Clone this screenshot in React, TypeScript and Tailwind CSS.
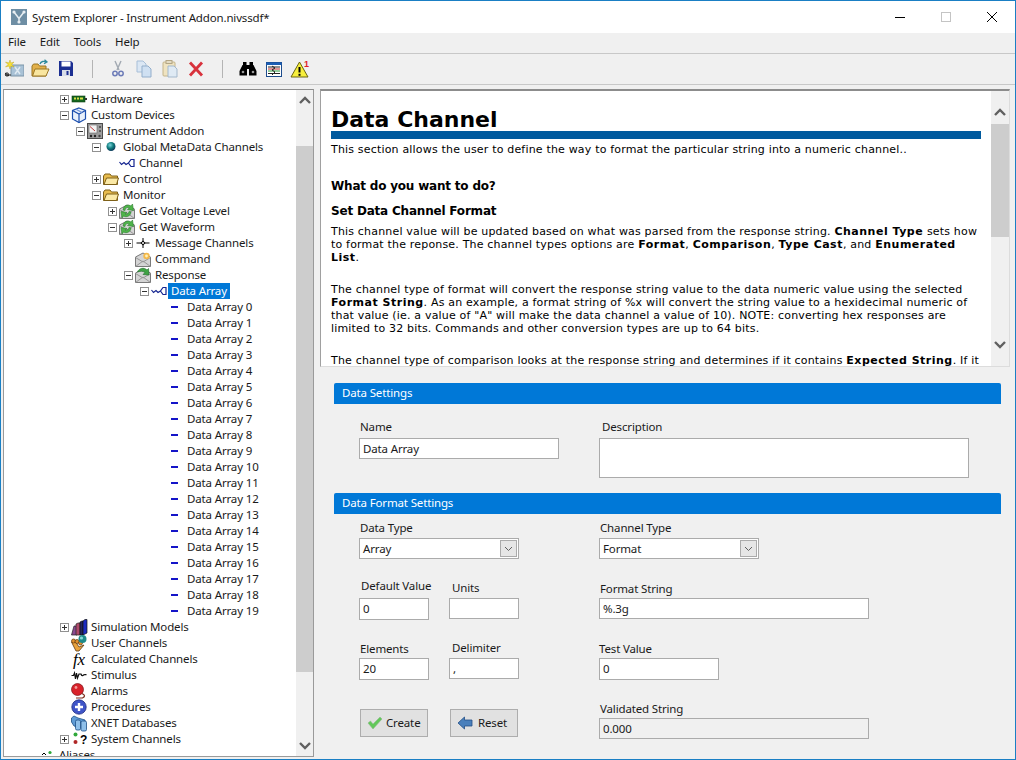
import type { ReactNode } from 'react';

type IconName =
  | 'hardware' | 'cube' | 'instrument' | 'globe' | 'channel' | 'folder' | 'message' | 'crosshair'
  | 'command' | 'response' | 'dash' | 'books' | 'users' | 'fx' | 'stimulus' | 'bell' | 'procedure'
  | 'xnet' | 'system' | 'alias';

type TreeRow = { label: string; level: number; exp?: 'plus' | 'minus'; icon: IconName; selected?: boolean };

const arrayRows: TreeRow[] = Array.from({ length: 20 }, (_, i) => ({
  label: `Data Array ${i}`,
  level: 6,
  icon: 'dash' as IconName,
}));

const rows: TreeRow[] = [
  { label: 'Hardware', level: 0, exp: 'plus', icon: 'hardware' },
  { label: 'Custom Devices', level: 0, exp: 'minus', icon: 'cube' },
  { label: 'Instrument Addon', level: 1, exp: 'minus', icon: 'instrument' },
  { label: 'Global MetaData Channels', level: 2, exp: 'minus', icon: 'globe' },
  { label: 'Channel', level: 3, icon: 'channel' },
  { label: 'Control', level: 2, exp: 'plus', icon: 'folder' },
  { label: 'Monitor', level: 2, exp: 'minus', icon: 'folder' },
  { label: 'Get Voltage Level', level: 3, exp: 'plus', icon: 'message' },
  { label: 'Get Waveform', level: 3, exp: 'minus', icon: 'message' },
  { label: 'Message Channels', level: 4, exp: 'plus', icon: 'crosshair' },
  { label: 'Command', level: 4, icon: 'command' },
  { label: 'Response', level: 4, exp: 'minus', icon: 'response' },
  { label: 'Data Array', level: 5, exp: 'minus', icon: 'channel', selected: true },
  ...arrayRows,
  { label: 'Simulation Models', level: 0, exp: 'plus', icon: 'books' },
  { label: 'User Channels', level: 0, icon: 'users' },
  { label: 'Calculated Channels', level: 0, icon: 'fx' },
  { label: 'Stimulus', level: 0, icon: 'stimulus' },
  { label: 'Alarms', level: 0, icon: 'bell' },
  { label: 'Procedures', level: 0, icon: 'procedure' },
  { label: 'XNET Databases', level: 0, icon: 'xnet' },
  { label: 'System Channels', level: 0, exp: 'plus', icon: 'system' },
  { label: 'Aliases', level: -2, icon: 'alias' },
];

function Envelope() {
  return (
    <>
      <path d="M0.5 6 L8 2 L15.5 6 V15.5 H0.5 Z" fill="#d4d4d4" stroke="#7a7a7a" />
      <path d="M0.5 15.5 L8 10 L15.5 15.5 M0.5 6.5 L8 11 L15.5 6.5" fill="none" stroke="#969696" />
    </>
  );
}

function TreeIcon({ name }: { name: IconName }) {
  let body: ReactNode = null;
  switch (name) {
    case 'hardware':
      body = (
        <>
          <rect x="1" y="5" width="13" height="6" fill="#14661f" stroke="#0d3f14" strokeWidth="0.6" />
          <rect x="3" y="6.5" width="2" height="2" fill="#d8e04a" />
          <rect x="6" y="6.5" width="2" height="2" fill="#d8e04a" />
          <rect x="9" y="6.5" width="3" height="2" fill="#d8e04a" />
          <path d="M14 7 H16 V9 H14" fill="#333" />
        </>
      );
      break;
    case 'cube':
      body = (
        <g fill="none" stroke="#1c4fae" strokeWidth="1.2">
          <path d="M8 1 L14.5 3.5 V12 L8 15.5 L1.5 12 V3.5 Z" fill="#e8f0fb" />
          <path d="M1.5 3.5 L8 7 L14.5 3.5 M8 7 V15.5" />
          <path d="M5 2.3 L11 5.5" stroke="#6f93d6" />
        </g>
      );
      break;
    case 'instrument':
      body = (
        <>
          <rect x="0.5" y="0.5" width="15" height="15" fill="#9c9c9c" stroke="#4c4c4c" />
          <rect x="2" y="2" width="8" height="8" fill="#f2f2f2" stroke="#666" strokeWidth="0.6" />
          <path d="M3 3.5 L8 8" stroke="#c23a3a" />
          <circle cx="13" cy="4" r="1" fill="#444" />
          <circle cx="13" cy="8" r="1" fill="#444" />
          <circle cx="4" cy="13" r="1.2" fill="#222" />
          <circle cx="8" cy="13" r="1.2" fill="#222" />
          <circle cx="12.5" cy="13" r="1.2" fill="#444" />
        </>
      );
      break;
    case 'globe':
      body = (
        <>
          <defs>
            <radialGradient id="globeFill" cx="0.4" cy="0.35" r="0.7">
              <stop offset="0" stopColor="#7fd4e0" />
              <stop offset="0.5" stopColor="#11807f" />
              <stop offset="1" stopColor="#0b2f55" />
            </radialGradient>
          </defs>
          <circle cx="8" cy="7.5" r="4.5" fill="url(#globeFill)" />
        </>
      );
      break;
    case 'channel':
      body = (
        <g fill="none" stroke="#14248f" strokeWidth="1.2">
          <path d="M0.5 7 L2.5 9.5 L5 7.5 L7 9.5 L9.5 8" />
          <path d="M15 4.5 H12 L9.5 8 L12 11.5 H15 Z" />
        </g>
      );
      break;
    case 'folder':
      body = (
        <>
          <path d="M0.5 5 L2 3 H7 L8.5 5 H14.5 V13.5 H0.5 Z" fill="#e8bc4e" stroke="#7e6018" />
          <path d="M1 13.5 L3.5 7 H15.5 L13.5 13.5 Z" fill="#fbe9a6" stroke="#7e6018" />
        </>
      );
      break;
    case 'message':
      body = (
        <>
          <Envelope />
          <path d="M4 7 A5 5 0 0 1 12 3 L13.5 1 L14.5 7.5 L8.5 6.5 L10.5 4.8 A3 3 0 0 0 6 7.5 Z" fill="#4fb54a" stroke="#2a7d2e" strokeWidth="0.6" />
          <path d="M12 9 A5 5 0 0 1 4.5 13 L3 15 L2 8.5 L8 9.5 L6 11.2 A3 3 0 0 0 10 8.5 Z" fill="#4fb54a" stroke="#2a7d2e" strokeWidth="0.6" />
        </>
      );
      break;
    case 'crosshair':
      body = (
        <>
          <path d="M1.5 8 H14.5 M8 3 V13" stroke="#000" />
          <path d="M8 5.5 L10.5 8 L8 10.5 L5.5 8 Z" fill="#000" />
          <circle cx="8" cy="8" r="1" fill="#fff" />
        </>
      );
      break;
    case 'command':
      body = (
        <>
          <Envelope />
          <circle cx="11.5" cy="5" r="3.2" fill="#f4b84a" />
          <circle cx="11.5" cy="5" r="1.4" fill="#fff2b8" />
        </>
      );
      break;
    case 'response':
      body = (
        <>
          <Envelope />
          <path d="M2.5 5 C4 1 9 0 12 3 L13.5 1.5 L14 8 L8 7.5 L10 5.5 C8 4 5 4 2.5 5 Z" fill="#3fa344" stroke="#1e6b28" strokeWidth="0.6" />
        </>
      );
      break;
    case 'dash':
      body = <rect x="4" y="7" width="7" height="2" fill="#1414c8" />;
      break;
    case 'books':
      body = (
        <>
          <path d="M0.5 16 L3 7 H6 V16 Z" fill="#8a4a8f" stroke="#222" strokeWidth="0.7" />
          <path d="M5 16 V5 L7 4 H9 V16 Z" fill="#b04a6a" stroke="#222" strokeWidth="0.7" />
          <path d="M9 16 V3 L11 2 H12 V16 Z" fill="#25255c" stroke="#111" strokeWidth="0.7" />
          <path d="M12 16 V2 L14 0.5 H16 V14 Z" fill="#1c2bc0" stroke="#111" strokeWidth="0.7" />
        </>
      );
      break;
    case 'users':
      body = (
        <>
          <path d="M0.5 7 L5 16 L8 16 L13 10 L8 12 L4 6 Z" fill="#e9a23c" stroke="#5e3a10" strokeWidth="0.8" />
          <circle cx="2.5" cy="6" r="2" fill="#e2912c" stroke="#5e3a10" strokeWidth="0.7" />
          <circle cx="6" cy="6.5" r="2" fill="#e2912c" stroke="#5e3a10" strokeWidth="0.7" />
          <circle cx="9.5" cy="8" r="2" fill="#e2912c" stroke="#5e3a10" strokeWidth="0.7" />
          <circle cx="11.5" cy="4" r="4" fill="#1d8a8a" />
          <circle cx="10.5" cy="3" r="1.6" fill="#86d8d8" />
        </>
      );
      break;
    case 'fx':
      body = (
        <text x="2" y="14" fontFamily="'Liberation Serif', serif" fontStyle="italic" fontSize="17" fill="#000">
          fx
        </text>
      );
      break;
    case 'stimulus':
      body = (
        <path
          d="M0.5 8.5 H2.5 L3.5 6 L4.5 12 L5.5 6 L6.5 11 L8 7 H10 C10.5 9 12 9 12.5 8 C13.5 7 14.5 8 15.5 7.5"
          fill="none"
          stroke="#111"
          strokeWidth="1.2"
        />
      );
      break;
    case 'bell':
      body = (
        <>
          <circle cx="6.5" cy="6.5" r="6" fill="#d8222a" stroke="#7d1015" strokeWidth="0.7" />
          <circle cx="5" cy="4.5" r="1.4" fill="#f49a9a" />
          <path d="M11 10.5 C14 12 14.5 13.5 11.5 15 H5" fill="none" stroke="#7a2a1a" strokeWidth="1.2" />
        </>
      );
      break;
    case 'procedure':
      body = (
        <>
          <circle cx="8" cy="8" r="7.2" fill="#3f55c8" stroke="#1c2a80" strokeWidth="0.8" />
          <path d="M8 4 V12 M4 8 H12" stroke="#fff" strokeWidth="2.4" />
        </>
      );
      break;
    case 'xnet':
      body = (
        <g stroke="#1c4f86" strokeWidth="0.8">
          <path d="M0.5 3 L3 1 L7 3 L14 5 V8 L7 7 V12 L3 11 L0.5 7 Z" fill="#5f9cd6" />
          <rect x="4.5" y="5" width="5" height="10" rx="1.5" fill="#8fc0ea" />
          <rect x="10" y="6" width="5.5" height="10" rx="1.5" fill="#8fc0ea" />
        </g>
      );
      break;
    case 'system':
      body = (
        <>
          <circle cx="4.5" cy="3.5" r="2" fill="#2fa83a" />
          <circle cx="4.5" cy="11" r="2" fill="#b02626" />
          <text x="9" y="12.5" fontFamily="'Liberation Sans', sans-serif" fontWeight="700" fontSize="12" fill="#000">
            ?
          </text>
        </>
      );
      break;
    case 'alias':
      body = (
        <>
          <path d="M3 8 L5 6 L7 8" fill="none" stroke="#000" />
          <circle cx="11" cy="5.5" r="1.6" fill="#2fa83a" />
        </>
      );
      break;
  }
  return (
    <svg width="16" height="16" viewBox="0 0 16 16" className="shrink-0 overflow-visible">
      {body}
    </svg>
  );
}

function Expander({ kind }: { kind?: 'plus' | 'minus' }) {
  if (!kind) return <span className="w-[9px] h-[9px] shrink-0" />;
  return (
    <span className="relative w-[9px] h-[9px] shrink-0 border border-[#919191] bg-white flex items-center justify-center">
      <span className="absolute w-[5px] h-px bg-[#333]" />
      {kind === 'plus' && <span className="absolute w-px h-[5px] bg-[#333]" />}
    </span>
  );
}

function Row({ row }: { row: TreeRow }) {
  return (
    <div className="flex items-center h-4 whitespace-nowrap" style={{ paddingLeft: 56 + row.level * 16 }}>
      <Expander kind={row.exp} />
      <span className="w-[2px] shrink-0" />
      <TreeIcon name={row.icon} />
      <span className={`ml-px px-[3px] h-4 leading-4 ${row.selected ? 'bg-[#0078d7] text-white' : ''}`}>{row.label}</span>
    </div>
  );
}

function Chevron({ up }: { up?: boolean }) {
  return (
    <svg width="12" height="8" viewBox="0 0 12 8" className="block">
      <path d={up ? 'M1 7 L6 2 L11 7' : 'M1 1 L6 6 L11 1'} fill="none" stroke="#606060" strokeWidth="2.4" />
    </svg>
  );
}

function ToolIcon({ children }: { children: ReactNode }) {
  return (
    <div className="w-[26px] flex justify-center">
      <svg width="20" height="20" viewBox="0 0 20 20">
        {children}
      </svg>
    </div>
  );
}

function Sep() {
  return (
    <div className="w-[26px] flex justify-center">
      <div className="w-px h-[18px] bg-[#b4b4b4]" />
    </div>
  );
}

function Toolbar() {
  return (
    <div className="h-[32px] border-t border-b border-[#c8c8c8] flex items-center">
      <ToolIcon>
        <rect x="7" y="6" width="13" height="11" fill="#a9c2d6" stroke="#7c95a8" />
        <path d="M11 8 L16 15 M16 8 L11 15" stroke="#dfeaf2" strokeWidth="1.5" />
        <path d="M6 1 L6.8 4 L10 3 L7.8 5.5 L10 8 L6.8 7 L6 10 L5 7 L1.5 8 L4 5.5 L1.5 3 L5 4 Z" fill="#f6e23a" stroke="#b79a10" strokeWidth="0.4" />
        <path d="M1 16 H7 M1 14 L5 17" stroke="#222" fill="none" />
        <circle cx="3" cy="15.5" r="1.6" fill="none" stroke="#222" />
      </ToolIcon>
      <ToolIcon>
        <path d="M2 7 L3.5 5 H8 L9.5 7 H16 V17 H2 Z" fill="#e2b04a" stroke="#9a7624" />
        <path d="M2.5 17 L5 10 H19 L16 17 Z" fill="#f9e6a0" stroke="#9a7624" />
        <path d="M10 5 C11 2 14 2 16 3 M14.5 0.8 L17 3 L14 4.8" fill="none" stroke="#2e8a9c" strokeWidth="1.3" />
      </ToolIcon>
      <ToolIcon>
        <path d="M3 2 H15 L17 4 V17 H3 Z" fill="#1c2f92" />
        <rect x="5.5" y="2.5" width="9" height="5" fill="#fff" />
        <rect x="6" y="11" width="8" height="6" fill="#d8dde8" />
        <rect x="10.5" y="12" width="2" height="4" fill="#1c2f92" />
      </ToolIcon>
      <Sep />
      <ToolIcon>
        <path d="M7 2 L11 11 M13 2 L9 11" stroke="#a2a9b2" strokeWidth="1.4" />
        <circle cx="7" cy="14.5" r="2.2" fill="none" stroke="#6d7cb8" strokeWidth="1.5" />
        <circle cx="13" cy="14.5" r="2.2" fill="none" stroke="#6d7cb8" strokeWidth="1.5" />
      </ToolIcon>
      <ToolIcon>
        <path d="M3 2 H9 L12 5 V13 H3 Z" fill="#dbe7f4" stroke="#a8bfd8" />
        <path d="M8 7 H14 L17 10 V18 H8 Z" fill="#cfe0f2" stroke="#93aecb" />
      </ToolIcon>
      <ToolIcon>
        <rect x="3" y="3" width="12" height="14" rx="1" fill="#efe3c0" stroke="#c4b48a" />
        <rect x="6" y="1.5" width="6" height="3" fill="#e4dcc4" stroke="#b3a684" />
        <path d="M8 7 H14 L17 10 V18 H8 Z" fill="#dfeaf4" stroke="#a3b8cc" />
      </ToolIcon>
      <ToolIcon>
        <path d="M4 3.5 L16 16.5 M16 3.5 L4 16.5" stroke="#d8323c" strokeWidth="2.8" />
      </ToolIcon>
      <Sep />
      <ToolIcon>
        <rect x="5" y="3" width="3.5" height="5" fill="#000" />
        <rect x="11.5" y="3" width="3.5" height="5" fill="#000" />
        <rect x="8" y="6" width="4" height="4" fill="#000" />
        <path d="M4.5 6 H9 V16.5 H1.5 V12 Z M11 6 H15.5 L18.5 12 V16.5 H11 Z" fill="#000" />
        <circle cx="5" cy="13" r="1.3" fill="#9a9a9a" />
        <circle cx="15" cy="13" r="1.3" fill="#9a9a9a" />
      </ToolIcon>
      <ToolIcon>
        <rect x="2.5" y="3.5" width="15" height="14" fill="#fff" stroke="#1c4b8c" />
        <rect x="2.5" y="3.5" width="15" height="2.5" fill="#1c5fb4" />
        <path d="M4 8 H16" stroke="#222" />
        <path d="M4 10 H16" stroke="#c22a2a" />
        <path d="M4 12 H16" stroke="#2a9c3a" />
        <path d="M4 14.5 H16" stroke="#222" />
        <path d="M8 7 L11 9 L8 11 L11 13 L8 16" fill="none" stroke="#222" />
      </ToolIcon>
      <ToolIcon>
        <path d="M9.5 3 L18 18 H1 Z" fill="#f7ef3c" stroke="#6a6410" />
        <path d="M9.5 8 V13.5" stroke="#000" strokeWidth="2" />
        <rect x="8.5" y="14.8" width="2" height="2" fill="#000" />
        <text x="14" y="8" fontFamily="'Liberation Sans', sans-serif" fontWeight="700" fontSize="9" fill="#e0202a">
          1
        </text>
      </ToolIcon>
    </div>
  );
}

function Box({ className, children }: { className: string; children?: ReactNode }) {
  return (
    <div className={`border border-[#ababab] px-[3px] leading-[20px] overflow-hidden whitespace-nowrap ${className}`}>
      {children}
    </div>
  );
}

function Combo({ value }: { value: string }) {
  return (
    <div className="w-[160px] h-[21px] border border-[#ababab] bg-white flex items-center justify-between pl-[3px] pr-px">
      <span>{value}</span>
      <span className="w-[17px] h-[17px] border border-[#ababab] bg-[#e6e6e6] flex items-center justify-center">
        <svg width="9" height="6" viewBox="0 0 9 6">
          <path d="M1 1 L4.5 4.5 L8 1" fill="none" stroke="#606060" />
        </svg>
      </span>
    </div>
  );
}

function SectionBar({ title }: { title: string }) {
  return <div className="h-[21px] leading-[20px] pl-2 text-white bg-[#0078d7] rounded-t-[2px]">{title}</div>;
}

function Label({ className, children }: { className?: string; children: ReactNode }) {
  return <div className={`h-4 leading-4 whitespace-nowrap ${className ?? ''}`}>{children}</div>;
}

function HelpPanel() {
  const helpFont = "font-['DejaVu_Sans','Liberation_Sans',sans-serif]";
  return (
    <div className="h-[278px] flex border-t-2 border-l border-b border-r border-t-[#8c8c8c] border-l-[#a0a0a0] border-b-[#dcdcdc] border-r-[#dcdcdc] bg-white overflow-hidden">
      <div className={`flex-1 min-w-0 pl-[10px] pr-[10px] pt-[16px] text-[11px] tracking-[0.18px] leading-[13px] text-black whitespace-nowrap [&_b]:tracking-[0.5px] ${helpFont}`}>
        <h1 className="h-[24px] text-[22px] leading-[26px] tracking-normal font-bold">Data Channel</h1>
        <div className="h-2 bg-[#005a9e]" />
        <p className="mt-[4px]">This section allows the user to define the way to format the particular string into a numeric channel..</p>
        <h2 className="mt-[22px] h-[14px] text-[12px] leading-[16px] tracking-[-0.2px] font-bold">What do you want to do?</h2>
        <h3 className="mt-[11px] h-[14px] text-[12px] leading-[16px] tracking-[-0.2px] font-bold">Set Data Channel Format</h3>
        <p className="mt-[8px]">
          This channel value will be updated based on what was parsed from the response string. <b>Channel Type</b> sets how
          <br />
          to format the reponse. The channel types options are <b>Format</b>, <b>Comparison</b>, <b>Type Cast</b>, and <b>Enumerated</b>
          <br />
          <b>List</b>.
        </p>
        <p className="mt-[19px]">
          The channel type of format will convert the response string value to the data numeric value using the selected
          <br />
          <b>Format String</b>. As an example, a format string of %x will convert the string value to a hexidecimal numeric of
          <br />
          that value (ie. a value of "A" will make the data channel a value of 10). NOTE: converting hex responses are
          <br />
          limited to 32 bits. Commands and other conversion types are up to 64 bits.
        </p>
        <p className="mt-[19px]">
          The channel type of comparison looks at the response string and determines if it contains <b>Expected String</b>. If it
        </p>
      </div>
      <div className="w-[18px] shrink-0 bg-[#f0f0f0] flex flex-col">
        <div className="h-[33px] flex items-end justify-center pb-[8px]">
          <Chevron up />
        </div>
        <div className="h-[113px] bg-[#cdcdcd]" />
        <div className="flex-1 flex items-end justify-center pb-[17px]">
          <Chevron />
        </div>
      </div>
    </div>
  );
}

function Form() {
  return (
    <div className="pl-[14px] w-[681px]">
      <div className="mt-4">
        <SectionBar title="Data Settings" />
        <div className="flex pl-[25px] pt-[15px]">
          <div className="w-[240px]">
            <Label className="ml-px">Name</Label>
            <Box className="mt-[3px] w-[200px] h-[21px] bg-white">Data Array</Box>
          </div>
          <div>
            <Label className="ml-[3px]">Description</Label>
            <Box className="mt-[3px] w-[370px] h-[40px] bg-white" />
          </div>
        </div>
      </div>
      <div className="mt-[15px]">
        <SectionBar title="Data Format Settings" />
        <div className="flex pl-[25px] pt-[6px]">
          <div className="w-[240px]">
            <Label className="ml-px">Data Type</Label>
            <div className="mt-[2px]">
              <Combo value="Array" />
            </div>
            <div className="mt-[19px] flex gap-5">
              <div className="w-[70px]">
                <Label className="ml-[2px]">Default Value</Label>
                <Box className="mt-1 w-[70px] h-[22px] bg-white">0</Box>
              </div>
              <div className="w-[70px] pt-[2px]">
                <Label className="ml-[3px]">Units</Label>
                <Box className="mt-[2px] w-[70px] h-[21px] bg-white" />
              </div>
            </div>
            <div className="mt-5 flex gap-5">
              <div className="w-[70px] pt-px">
                <Label className="ml-px">Elements</Label>
                <Box className="mt-px w-[70px] h-[22px] bg-white">20</Box>
              </div>
              <div className="w-[70px]">
                <Label className="ml-[3px]">Delimiter</Label>
                <Box className="mt-[2px] w-[70px] h-[21px] bg-white">,</Box>
              </div>
            </div>
            <div className="mt-[29px] ml-px flex gap-[22px]">
              <button className="w-[68px] h-[28px] border border-[#adadad] bg-[#e1e1e1] flex items-center pl-[6px] gap-[3px]">
                <svg width="16" height="14" viewBox="0 0 16 14">
                  <path d="M1 7 L3.5 5 L6 8 L13 1 L15 3 L6 13 Z" fill="#62c85a" stroke="#8fb88a" strokeWidth="0.6" />
                </svg>
                <span>Create</span>
              </button>
              <button className="w-[68px] h-[28px] border border-[#adadad] bg-[#e1e1e1] flex items-center pl-[6px] gap-[5px]">
                <svg width="16" height="14" viewBox="0 0 16 14">
                  <path d="M1 7 L7.5 1 V4 H15 V10 H7.5 V13 Z" fill="#4a80bc" stroke="#234f86" strokeWidth="0.8" />
                </svg>
                <span>Reset</span>
              </button>
            </div>
          </div>
          <div>
            <Label className="ml-px">Channel Type</Label>
            <div className="mt-[2px]">
              <Combo value="Format" />
            </div>
            <Label className="mt-[22px] ml-px">Format String</Label>
            <Box className="mt-px w-[270px] h-[21px] bg-white">%.3g</Box>
            <Label className="mt-[22px]">Test Value</Label>
            <Box className="mt-px w-[120px] h-[22px] bg-white">0</Box>
            <Label className="mt-[21px] ml-px">Validated String</Label>
            <Box className="mt-px w-[270px] h-[21px] bg-[#f0f0f0]">0.000</Box>
          </div>
        </div>
      </div>
    </div>
  );
}

export default function App() {
  return (
    <div className="w-[1016px] h-[760px] border border-[#1a7fc4] bg-[#f0f0f0] flex flex-col overflow-hidden text-[11.5px] tracking-[-0.15px] text-[#1a1a1a] font-['Noto_Sans',sans-serif]">
      <div className="h-[32px] bg-white flex items-center shrink-0">
        <svg width="16" height="16" viewBox="0 0 16 16" className="ml-[10px] mr-[5px]">
          <rect width="16" height="16" fill="#6e8ea4" />
          <path d="M3 3 L8 9.5 L13 3 M8 9.5 V13" stroke="#e8eef2" strokeWidth="1.5" fill="none" />
          <circle cx="3" cy="3" r="1.6" fill="#e8eef2" />
          <circle cx="13" cy="3" r="1.6" fill="#e8eef2" />
          <circle cx="8" cy="13" r="1.6" fill="#e8eef2" />
        </svg>
        <span className="pt-px">System Explorer - Instrument Addon.nivssdf*</span>
        <div className="ml-auto flex">
          <div className="w-[46px] h-[32px] flex items-center justify-center">
            <span className="w-[10px] h-px bg-black" />
          </div>
          <div className="w-[46px] h-[32px] flex items-center justify-center">
            <span className="w-[10px] h-[10px] border border-[#c4c4c4]" />
          </div>
          <div className="w-[46px] h-[32px] flex items-center justify-center">
            <svg width="10" height="10" viewBox="0 0 10 10">
              <path d="M0 0 L10 10 M10 0 L0 10" stroke="#000" />
            </svg>
          </div>
        </div>
      </div>
      <div className="h-[20px] leading-[18px] flex gap-[14px] pl-[7px] shrink-0">
        <span>File</span>
        <span>Edit</span>
        <span>Tools</span>
        <span>Help</span>
      </div>
      <Toolbar />
      <div className="flex-1 min-h-0 flex pt-1 pl-[2px] pb-[2px] gap-[6px]">
        <div className="w-[311px] shrink-0 flex border border-[#9a9a9a] border-t-[#8c8c8c] bg-white overflow-hidden">
          <div className="flex-1 min-w-0 pt-px overflow-hidden">
            {rows.map((row) => (
              <Row key={row.label} row={row} />
            ))}
          </div>
          <div className="w-[17px] shrink-0 bg-[#f0f0f0] flex flex-col">
            <div className="h-[56px] pt-[6px] flex justify-center">
              <Chevron up />
            </div>
            <div className="h-[526px] bg-[#cdcdcd]" />
            <div className="flex-1 flex items-end justify-center pb-[6px]">
              <Chevron />
            </div>
          </div>
        </div>
        <div className="flex-1 min-w-0">
          <div className="w-[690px]">
            <HelpPanel />
          </div>
          <Form />
        </div>
      </div>
    </div>
  );
}
